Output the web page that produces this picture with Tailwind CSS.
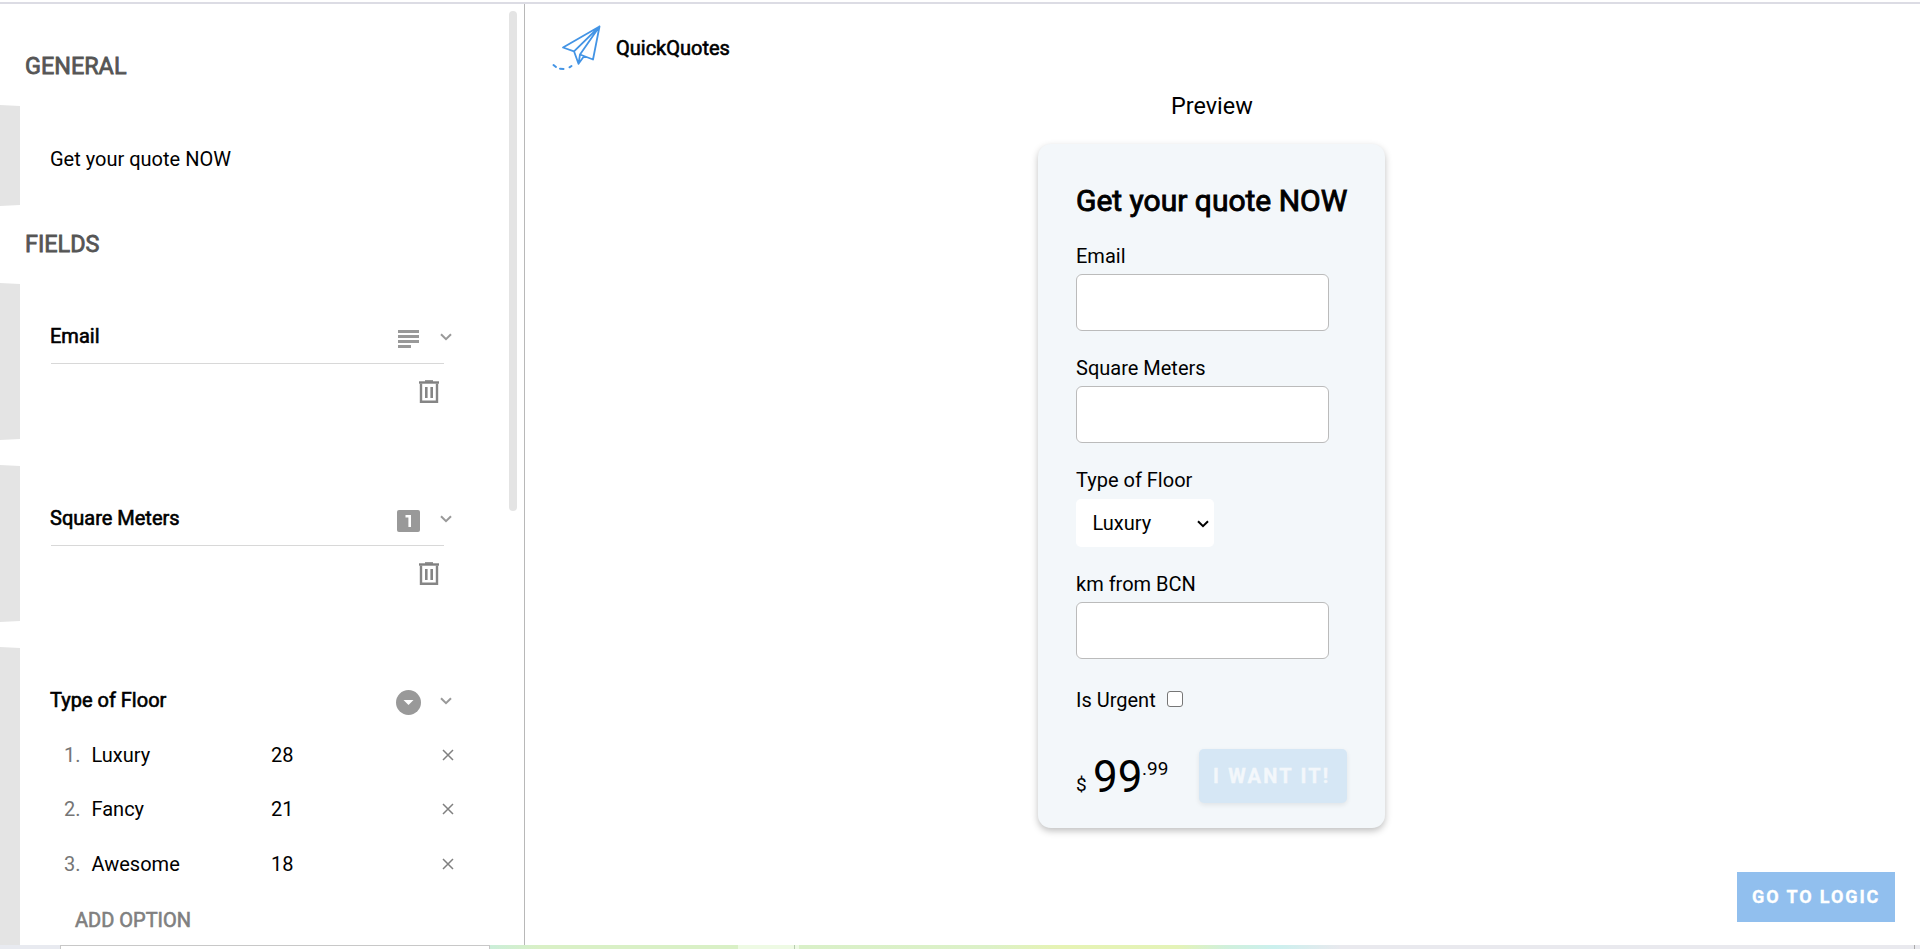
<!DOCTYPE html>
<html lang="en">
<head>
<meta charset="utf-8">
<title>QuickQuotes</title>
<script src="https://cdn.jsdelivr.net/npm/@tailwindcss/browser@4"></script>
</head>
<body class="w-[1920px] h-[949px] overflow-hidden bg-white text-black font-[Roboto,sans-serif] text-[20px] leading-[30px] flex flex-col">
<svg class="hidden">
  <symbol id="chev" viewBox="0 0 12 8"><path d="M1 1.2 6 6.2 11 1.2" fill="none" stroke="currentColor" stroke-width="2"/></symbol>
  <symbol id="cross" viewBox="0 0 12 12"><path d="M1 1 11 11M11 1 1 11" fill="none" stroke="#808080" stroke-width="1.5"/></symbol>
  <symbol id="trash" viewBox="0 0 20 24"><path d="M6 1h8" stroke="#999" stroke-width="2"/><path d="M0 2.500h20" stroke="#808080" stroke-width="2.400"/><path d="M2 3.500V21.800h16V3.500" fill="none" stroke="#858585" stroke-width="2.400"/><path d="M7.300 7v11M12.700 7v11" stroke="#858585" stroke-width="2.600"/></symbol>
</svg>
<div class="mt-[2px] h-[2px] shrink-0 bg-[#dcdce4]"></div>
<div class="flex h-[941px] shrink-0">
  <aside class="w-[525px] border-r border-[#b8b8b8] flex">
    <div class="w-[509px] flex flex-col">
      <h2 class="mt-[48px] mb-[25px] pl-[25px] h-[28px] leading-[28px] text-[23.4px] text-[#555] [-webkit-text-stroke:0.8px_#555]">GENERAL</h2>
      <section class="flex h-[101px]">
        <div class="w-[20px] bg-[#e4e4e4] [clip-path:polygon(0_0,100%_1px,100%_calc(100%-1px),0_100%)]"></div>
        <div class="pl-[30px] pt-[39px]">Get your quote NOW</div>
      </section>
      <h2 class="pl-[25px] h-[77px] leading-[77px] text-[23.4px] text-[#555] [-webkit-text-stroke:0.8px_#555]">FIELDS</h2>
      <section class="flex h-[157px] mb-[25px]">
        <div class="w-[20px] bg-[#e4e4e4] [clip-path:polygon(0_0,100%_1px,100%_calc(100%-1px),0_100%)]"></div>
        <div class="pl-[30px] pt-[38px] w-[432px]">
          <div class="flex h-[30px]">
            <div class="w-[348px] [-webkit-text-stroke:0.6px_#000]">Email</div>
            <svg class="w-[21px] h-[18px] mt-[9px]" viewBox="0 0 21 18"><path d="M0 1.500h21M0 6.500h21M0 11.500h21M0 16.500h13" stroke="#999" stroke-width="3"/></svg>
            <svg class="w-[12px] h-[8px] mt-[12px] ml-[21px] text-[#999]"><use href="#chev"/></svg>
          </div>
          <div class="mt-[12px] ml-[1px] w-[393px] h-px bg-[#d8d8d8]"></div>
          <svg class="w-[20px] h-[24px] mt-[16px] ml-[369px]"><use href="#trash"/></svg>
        </div>
      </section>
      <section class="flex h-[157px] mb-[25px]">
        <div class="w-[20px] bg-[#e4e4e4] [clip-path:polygon(0_0,100%_1px,100%_calc(100%-1px),0_100%)]"></div>
        <div class="pl-[30px] pt-[38px] w-[432px]">
          <div class="flex h-[30px]">
            <div class="w-[347px] [-webkit-text-stroke:0.6px_#000]">Square Meters</div>
            <svg class="w-[23px] h-[22px] mt-[7px]" viewBox="0 0 23 22"><rect width="23" height="22" rx="2" fill="#999"/><path d="M8.500 6.300h4.200V17" fill="none" stroke="#fff" stroke-width="2.600"/></svg>
            <svg class="w-[12px] h-[8px] mt-[12px] ml-[20px] text-[#999]"><use href="#chev"/></svg>
          </div>
          <div class="mt-[12px] ml-[1px] w-[393px] h-px bg-[#d8d8d8]"></div>
          <svg class="w-[20px] h-[24px] mt-[16px] ml-[369px]"><use href="#trash"/></svg>
        </div>
      </section>
      <section class="flex h-[298px]">
        <div class="w-[20px] bg-[#e4e4e4] [clip-path:polygon(0_0,100%_1px,100%_100%,0_100%)]"></div>
        <div class="pl-[30px] pt-[38px] w-[442px]">
          <div class="flex h-[30px]">
            <div class="w-[346px] [-webkit-text-stroke:0.6px_#000]">Type of Floor</div>
            <svg class="w-[25px] h-[25px] mt-[5px]" viewBox="0 0 25 25"><circle cx="12.500" cy="12.500" r="12.500" fill="#999"/><path d="M7.500 10h10l-5 5z" fill="#fff"/></svg>
            <svg class="w-[12px] h-[8px] mt-[12px] ml-[19px] text-[#999]"><use href="#chev"/></svg>
          </div>
          <div class="mt-[13px] mb-[1px] flex flex-col">
            <div class="flex items-center h-[54px]"><span class="pl-[14px] w-[41.500px] text-[#757575]">1.</span><span class="w-[179.500px]">Luxury</span><span class="w-[171px]">28</span><svg class="size-[12px]"><use href="#cross"/></svg></div>
            <div class="flex items-center h-[54px]"><span class="pl-[14px] w-[41.500px] text-[#757575]">2.</span><span class="w-[179.500px]">Fancy</span><span class="w-[171px]">21</span><svg class="size-[12px]"><use href="#cross"/></svg></div>
            <div class="flex items-center h-[55px]"><span class="pl-[14px] w-[41.500px] text-[#757575]">3.</span><span class="w-[179.500px]">Awesome</span><span class="w-[171px]">18</span><svg class="size-[12px]"><use href="#cross"/></svg></div>
          </div>
          <div class="pl-[25px] h-[56px] leading-[56px] text-[#808080] [-webkit-text-stroke:0.6px_#808080]">ADD OPTION</div>
        </div>
      </section>
    </div>
    <div class="mt-[7px] w-[8px] h-[500px] rounded-full bg-[#e4e4e4]"></div>
  </aside>
  <main class="w-[1395px] flex flex-col">
    <div class="flex h-[82px] pl-[26px]">
      <svg class="w-[50px] h-[48px] mt-[20px]" viewBox="0 0 50 48" fill="none" stroke="#4394e5" stroke-width="1.800" stroke-linejoin="round" stroke-linecap="round"><path d="M48.500 2.500 12 23.500l11 3.800zM48.500 2.500 42 35.500l-13-5zM23 27.300l4.500 12.500L29 30.500 48.500 2.500M27.500 39.800l5.500-7.500"/><path d="M2.500 41l2.500 2M9 44.700l3.500.3M18.500 43.300l2-1.300" stroke-width="2"/></svg>
      <div class="ml-[15px] mt-[29px] [-webkit-text-stroke:0.6px_#000]">QuickQuotes</div>
    </div>
    <div class="h-[58px] pl-[646px] leading-[41px] text-[23.4px]">Preview</div>
    <form class="ml-[513px] w-[347px] h-[684px] rounded-[13px] bg-[#f3f7fa] pl-[38px] flex flex-col items-start [box-shadow:0_3px_7px_rgba(0,0,0,.25)]">
      <h1 class="mt-[41px] h-[32px] leading-[32px] text-[30px] [-webkit-text-stroke:0.9px_#000] whitespace-nowrap">Get your quote NOW</h1>
      <label class="mt-[24px] h-[33px] leading-[30px]">Email</label>
      <input class="w-[253px] h-[57px] rounded-[6px] border border-[#bbb] bg-white">
      <label class="mt-[22px] h-[33px] leading-[30px]">Square Meters</label>
      <input class="w-[253px] h-[57px] rounded-[6px] border border-[#bbb] bg-white">
      <label class="mt-[22px] h-[34px] leading-[30px]">Type of Floor</label>
      <div class="flex items-center w-[138px] h-[48px] rounded-[5px] bg-white pl-[16.500px]"><span class="w-[104.500px]">Luxury</span><svg class="w-[12px] h-[8px] mt-[2px]"><use href="#chev"/></svg></div>
      <label class="mt-[22px] h-[33px] leading-[30px]">km from BCN</label>
      <input class="w-[253px] h-[57px] rounded-[6px] border border-[#bbb] bg-white">
      <div class="mt-[26px] flex h-[30px]"><span class="w-[91px]">Is Urgent</span><div class="size-[16px] mt-[6px] rounded-[3px] border border-[#767676] bg-white"></div></div>
      <div class="mt-[34px] flex h-[54px]">
        <span class="w-[17px] mt-[21px] text-[19px]">$</span>
        <span class="w-[49px] mt-[1px] text-[44px] leading-[54px]">99</span>
        <span class="w-[57px] mt-[5px] text-[19px]">.99</span>
        <div class="w-[148px] h-[54px] leading-[54px] rounded-[5px] bg-[#d6e7f5] text-[#f3f7fb] font-bold tracking-[2.200px] pl-[14px] whitespace-nowrap [-webkit-text-stroke:0.4px_#f3f7fb] [box-shadow:0_2px_5px_rgba(0,0,0,.08)]">I WANT IT!</div>
      </div>
    </form>
    <div class="mt-[44px] ml-[1212px] w-[158px] h-[50px] leading-[50px] pl-[15px] bg-[#91bfee] text-white font-bold text-[18px] tracking-[1.900px] whitespace-nowrap [-webkit-text-stroke:0.3px_#fff]">GO TO LOGIC</div>
  </main>
</div>
<div class="flex h-[4px] shrink-0">
  <div class="w-[60px] bg-[#e8eaf0]"></div>
  <div class="w-[430px] border-t border-x border-[#c8c8c8] bg-white"></div>
  <div class="w-[248px] bg-linear-to-r from-[#cbeed9] to-[#d9f0c6] to-20%"></div>
  <div class="w-[57px] bg-[#eefae4] border-r border-[#b8ccb0]"></div>
  <div class="w-[4px] bg-[#eefae4]"></div>
  <div class="w-[541px] bg-[linear-gradient(90deg,#d9f0c8_0%,#dcf1c8_35%,#e6f3b4_48%,#e4f3b8_70%,#d0f0dc_79%,#cbf0ee_88%,#e8e9ee_100%)]"></div>
  <div class="w-[575px] bg-[#e9e9ee] border-r border-[#aaa]"></div>
  <div class="w-[5px] bg-[#e9e9ee]"></div>
</div>
</body>
</html>
